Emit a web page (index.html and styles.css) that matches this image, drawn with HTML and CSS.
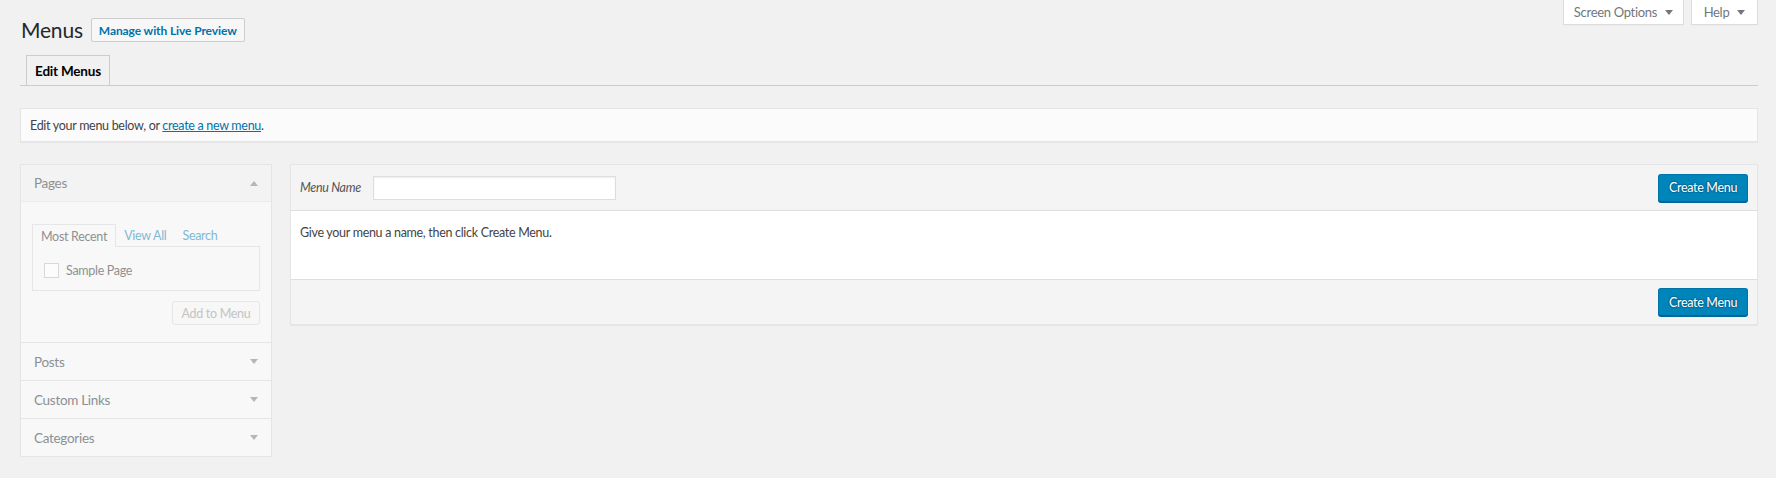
FILE: index.html
```html
<!DOCTYPE html>
<html lang="en">
<head>
<meta charset="utf-8">
<title>Menus</title>
<link rel="stylesheet" href="styles.css">
</head>
<body>
<div class="page">
  <header class="top">
    <div class="title-row">
      <h1 class="title">Menus</h1>
      <a class="title-action" href="#">Manage with Live Preview</a>
    </div>
    <div class="screen-meta">
      <button class="meta-btn meta-btn--options">Screen Options
        <svg class="meta-arrow" width="8" height="5" viewBox="0 0 8 5"><polygon points="0,0 8,0 4,5" fill="#72777c"/></svg>
      </button>
      <button class="meta-btn meta-btn--help">Help
        <svg class="meta-arrow" width="8" height="5" viewBox="0 0 8 5"><polygon points="0,0 8,0 4,5" fill="#72777c"/></svg>
      </button>
    </div>
  </header>

  <nav class="tabs">
    <span class="tab">Edit Menus</span>
  </nav>

  <div class="notice"><p class="notice-text">Edit your menu below, or <a href="#">create a new menu</a>.</p></div>

  <div class="columns">
    <aside class="sidebar">
      <div class="acc-title acc-title--open">
        <span>Pages</span>
        <svg width="8" height="5" viewBox="0 0 8 5"><polygon points="0,5 8,5 4,0" fill="#b4b6b8"/></svg>
      </div>
      <div class="acc-content">
        <div class="sub-tabs">
          <span class="sub-tab sub-tab--active">Most Recent</span>
          <span class="sub-tab sub-tab--link">View All</span>
          <span class="sub-tab sub-tab--link">Search</span>
        </div>
        <div class="sub-panel">
          <label class="check-row"><span class="checkbox"></span>Sample Page</label>
        </div>
        <div class="add-row">
          <button class="add-btn">Add to Menu</button>
        </div>
      </div>
      <div class="acc-title">
        <span>Posts</span>
        <svg width="8" height="5" viewBox="0 0 8 5"><polygon points="0,0 8,0 4,5" fill="#b4b6b8"/></svg>
      </div>
      <div class="acc-title">
        <span>Custom Links</span>
        <svg width="8" height="5" viewBox="0 0 8 5"><polygon points="0,0 8,0 4,5" fill="#b4b6b8"/></svg>
      </div>
      <div class="acc-title">
        <span>Categories</span>
        <svg width="8" height="5" viewBox="0 0 8 5"><polygon points="0,0 8,0 4,5" fill="#b4b6b8"/></svg>
      </div>
    </aside>

    <section class="editor">
      <div class="editor-header">
        <div class="name-field">
          <label class="name-label" for="menu-name">Menu Name</label>
          <input class="name-input" id="menu-name" type="text">
        </div>
        <button class="primary-btn">Create Menu</button>
      </div>
      <div class="editor-body">Give your menu a name, then click Create Menu.</div>
      <div class="editor-footer">
        <button class="primary-btn">Create Menu</button>
      </div>
    </section>
  </div>
</div>
</body>
</html>
```

FILE: styles.css
```css
html, body {
  margin: 0;
  padding: 0;
  background: #f1f1f1;
}

body {
  font-family: Lato, "Open Sans", "Liberation Sans", sans-serif;
  font-size: 12.5px;
  letter-spacing: -0.3px;
  color: #444;
}

button, input {
  font-family: inherit;
  letter-spacing: inherit;
}

.page {
  padding: 0 18px 0 20px;
}

/* ---------- top ---------- */
.top {
  display: flex;
  justify-content: space-between;
  align-items: flex-start;
}

.title-row {
  display: flex;
  align-items: center;
  gap: 8px;
  padding-top: 18px;
}

.title {
  margin: 0;
  padding-left: 1px;
  font-size: 21px;
  font-weight: 400;
  letter-spacing: -0.2px;
  line-height: 24px;
  color: #23282d;
}

.title-action {
  display: inline-flex;
  align-items: center;
  justify-content: center;
  box-sizing: border-box;
  width: 154px;
  height: 24px;
  border: 1px solid #ccc;
  border-radius: 2px;
  background: #f7f7f7;
  color: #0073aa;
  font-weight: 700;
  font-size: 12px;
  letter-spacing: -0.1px;
  text-decoration: none;
}

.screen-meta {
  display: flex;
  gap: 7px;
}

.meta-btn {
  display: flex;
  align-items: center;
  justify-content: center;
  gap: 8px;
  box-sizing: border-box;
  height: 25px;
  padding: 0;
  background: #fff;
  border: 1px solid #ddd;
  border-top: none;
  box-shadow: 0 1px 1px -1px rgba(0, 0, 0, .1);
  color: #72777c;
  font-size: 13px;
}

.meta-btn--options { width: 121px; }
.meta-btn--help { width: 67px; }

/* ---------- tabs ---------- */
.tabs {
  display: flex;
  margin-top: 13px;
  padding-left: 6px;
  border-bottom: 1px solid #ccc;
}

.tab {
  display: flex;
  align-items: center;
  justify-content: center;
  box-sizing: border-box;
  width: 84px;
  height: 30px;
  border: 1px solid #ccc;
  border-bottom: none;
  background: #f1f1f1;
  color: #000;
  font-size: 13.5px;
  font-weight: 700;
  letter-spacing: -0.2px;
}

/* ---------- notice ---------- */
.notice {
  display: flex;
  align-items: center;
  box-sizing: border-box;
  height: 34px;
  margin-top: 22px;
  padding: 0 9px;
  background: #fbfbfb;
  border: 1px solid #e5e5e5;
  box-shadow: 0 1px 1px rgba(0, 0, 0, .04);
  color: #444;
}

.notice-text {
  margin: 0;
}

.notice a {
  color: #0073aa;
  text-decoration: underline;
}

/* ---------- columns ---------- */
.columns {
  display: flex;
  align-items: flex-start;
  gap: 18px;
  margin-top: 22px;
}

.sidebar {
  flex: 0 0 252px;
  box-sizing: border-box;
  border: 1px solid #e5e5e5;
  background: #f8f8f8;
  box-shadow: 0 1px 1px rgba(0, 0, 0, .04);
}

.acc-title {
  display: flex;
  align-items: center;
  justify-content: space-between;
  box-sizing: border-box;
  height: 38px;
  padding: 0 13px 0 13px;
  border-top: 1px solid #e5e5e5;
  background: #f8f8f8;
  color: #8d9093;
  font-size: 13.5px;
}

.acc-title--open {
  height: 37px;
  border-top: none;
  border-bottom: 1px solid #ececec;
  background: #f3f3f3;
}

.acc-content {
  padding: 22px 11px 17px;
  background: #f8f8f8;
}

.sub-tabs {
  display: flex;
  align-items: stretch;
  height: 22px;
}

.sub-tab {
  display: flex;
  align-items: center;
  padding: 0 8px;
  white-space: nowrap;
  color: #909090;
}

.sub-tab--active {
  box-sizing: border-box;
  min-width: 81px;
  border: 1px solid #e6e6e6;
  border-bottom: none;
  background: #f8f8f8;
  margin-bottom: -1px;
  height: 23px;
  position: relative;
}

.sub-tab--link {
  color: #80b9d5;
}

.sub-panel {
  display: flex;
  align-items: center;
  box-sizing: border-box;
  height: 45px;
  padding: 3px 11px 0;
  border: 1px solid #e6e6e6;
  background: #f8f8f8;
}

.check-row {
  display: flex;
  align-items: center;
  gap: 7px;
  color: #909090;
}

.checkbox {
  display: inline-block;
  box-sizing: border-box;
  width: 15px;
  height: 15px;
  border: 1px solid #d6d8da;
  background: #fcfcfc;
}

.add-row {
  display: flex;
  justify-content: flex-end;
  margin-top: 10px;
}

.add-btn {
  box-sizing: border-box;
  width: 88px;
  height: 24px;
  padding: 0;
  border: 1px solid #e6e6e6;
  border-radius: 3px;
  background: #f7f7f7;
  color: #c4c4c4;
  font-size: 12.5px;
}

/* ---------- editor ---------- */
.editor {
  flex: 1;
  border: 1px solid #e5e5e5;
  background: #fff;
  box-shadow: 0 1px 1px rgba(0, 0, 0, .04);
}

.editor-header {
  display: flex;
  align-items: center;
  justify-content: space-between;
  box-sizing: border-box;
  height: 46px;
  padding: 0 9px;
  border-bottom: 1px solid #dfdfdf;
  background: #f4f4f4;
}

.name-field {
  display: flex;
  align-items: center;
}

.name-label {
  width: 73px;
  font-style: italic;
  color: #555;
}

.name-input {
  box-sizing: border-box;
  width: 243px;
  height: 24px;
  margin: 0;
  border: 1px solid #ddd;
  box-shadow: inset 0 1px 2px rgba(0, 0, 0, .07);
  background: #fff;
}

.editor-body {
  box-sizing: border-box;
  height: 69px;
  padding: 12px 9px 10px;
  border-bottom: 1px solid #dfdfdf;
  line-height: 19px;
  color: #444;
}

.editor-footer {
  display: flex;
  align-items: center;
  justify-content: flex-end;
  height: 44px;
  padding: 0 9px;
  background: #f4f4f4;
}

.primary-btn {
  box-sizing: border-box;
  width: 90px;
  height: 28px;
  padding: 0;
  border: 1px solid #0073aa;
  border-bottom-color: #006799;
  border-radius: 3px;
  background: #0085ba;
  box-shadow: 0 1px 0 #006799;
  color: #fff;
  font-size: 12.5px;
  text-shadow: 0 -1px 1px #006799, 1px 0 1px #006799, 0 1px 1px #006799, -1px 0 1px #006799;
}
```
